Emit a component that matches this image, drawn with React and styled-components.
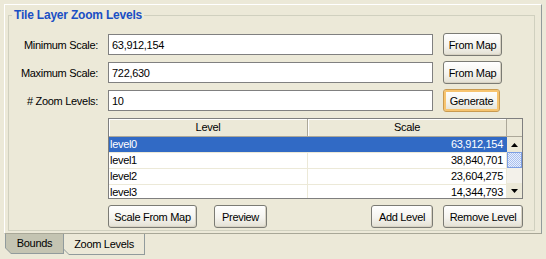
import React from 'react'
import styled, { createGlobalStyle } from 'styled-components'

const GlobalStyle = createGlobalStyle`
  html, body {
    margin: 0;
    padding: 0;
    background: #ece9d8;
  }
  body {
    font-family: "Liberation Sans", Arial, sans-serif;
    font-size: 11px;
    letter-spacing: -0.3px;
    color: #000;
  }
`

const Window = styled.div`
  width: 546px;
  height: 259px;
  box-sizing: border-box;
  padding: 4px 4px 0 4px;
  display: flex;
  flex-direction: column;
`

const TabPane = styled.div`
  height: 230px;
  box-sizing: border-box;
  border-left: 1px solid #fff;
  border-top: 1px solid #fff;
  border-right: 1px solid #919b9c;
  border-bottom: 1px solid #a8a797;
  padding: 3px 6px 0 3px;
`

const Group = styled.fieldset`
  box-sizing: border-box;
  height: 223px;
  margin: 0;
  padding: 0;
  border: 1px solid #d0d0bf;
  min-width: 0;
`

const Title = styled.legend`
  margin-left: 3px;
  padding: 0 2px;
  font-weight: bold;
  font-size: 12px;
  line-height: 14px;
  letter-spacing: -0.2px;
  color: #1a4fc4;
`

const Body = styled.div`
  padding-top: 11px;
`

const Form = styled.div`
  display: grid;
  grid-template-columns: 89px 325px auto;
  grid-auto-rows: 23px;
  column-gap: 10px;
  row-gap: 5px;
  align-items: center;
`

const Label = styled.label`
  text-align: right;
`

const Field = styled.input`
  box-sizing: border-box;
  height: 21px;
  width: 100%;
  margin: 0;
  padding: 0 3px;
  border: 1px solid #808080;
  background: #fff;
  font: inherit;
  letter-spacing: inherit;
  color: #000;
  outline: none;
`

const Btn = styled.button`
  box-sizing: border-box;
  height: 23px;
  width: ${p => p.$w}px;
  margin: 0;
  padding: 0;
  font: inherit;
  letter-spacing: inherit;
  color: #000;
  justify-self: start;
  border: 1px solid ${p => (p.$focus ? '#c99a50' : '#7b7b74')};
  border-radius: 3px;
  background: linear-gradient(#ffffff, #f5f4ef 55%, #e3e0d3);
  box-shadow: ${p => (p.$focus ? 'inset 0 0 0 2px #f7c46f' : 'inset -1px -1px 0 #d8d3c4')};
`

const Lower = styled.div`
  margin: 6px 0 0 99px;
  width: 415px;
`

const Table = styled.div`
  box-sizing: border-box;
  height: 81px;
  border: 1px solid #7f7f7f;
  background: #fff;
  display: grid;
  grid-template-columns: 398px 15px;
  grid-template-rows: 18px 61px;
`

const Header = styled.div`
  display: grid;
  grid-template-columns: 199px 199px;
  background: #ece9d8;
`

const HeadCell = styled.div`
  box-sizing: border-box;
  border-right: 1px solid #aca899;
  border-bottom: 1px solid #aca899;
  box-shadow: inset 1px 1px 0 #fff;
  text-align: center;
  line-height: 17px;
`

const Corner = styled.div`
  background: #ece9d8;
  border-bottom: 1px solid #aca899;
  box-sizing: border-box;
`

const Rows = styled.div`
  overflow: hidden;
`

const Row = styled.div`
  display: grid;
  grid-template-columns: 199px 199px;
  height: 16px;
  box-sizing: border-box;
  border-bottom: 1px solid #ece9d8;
  background: ${p => (p.$selected ? '#316ac5' : '#fff')};
  color: ${p => (p.$selected ? '#fff' : '#000')};
  line-height: 15px;
`

const Cell = styled.div`
  box-sizing: border-box;
  padding: ${p => (p.$right ? '0 3px 0 0' : '0 0 0 1px')};
  text-align: ${p => (p.$right ? 'right' : 'left')};
  border-right: 1px solid ${p => (p.$selected ? '#316ac5' : '#ece9d8')};
`

const Scroll = styled.div`
  display: flex;
  flex-direction: column;
  background: #f3f1ea;
`

const Arrow = styled.div`
  height: 15px;
  flex: none;
  background: #ece9d8;
  display: flex;
  align-items: center;
  justify-content: center;
`

const Thumb = styled.div`
  height: 16px;
  flex: none;
  box-sizing: border-box;
  border: 1px solid #7d9fe3;
  background: repeating-conic-gradient(#a9c0ef 0 25%, #e8effc 0 50%) 0 0 / 2px 2px;
`

const Track = styled.div`
  flex: 1;
`

const Actions = styled.div`
  margin-top: 6px;
  display: flex;
  justify-content: space-between;
`

const ActionGroup = styled.div`
  display: flex;
  gap: ${p => p.$gap}px;
`

const Tabs = styled.div`
  display: flex;
  padding-left: 1px;
`

const Tab = styled.div`
  width: ${p => p.$w}px;
  height: ${p => p.$h}px;
  padding: 0 1px 1px 1px;
  box-sizing: border-box;
  margin-left: ${p => p.$ml || 0}px;
  background: #919b9c;
  clip-path: polygon(0 0, 100% 0, 100% 100%, 6px 100%, 0 calc(100% - 6px));
`

const TabFace = styled.div`
  height: 100%;
  background: ${p => (p.$active ? '#ece9d8' : '#c4c4b2')};
  clip-path: polygon(0 0, 100% 0, 100% 100%, 5px 100%, 0 calc(100% - 5px));
  display: flex;
  align-items: center;
  justify-content: center;
  padding-bottom: 1px;
  box-sizing: border-box;
`

const TriUp = () => (
  <svg width="7" height="4" viewBox="0 0 7 4"><polygon points="3.5,0 7,4 0,4" fill="#000" /></svg>
)
const TriDown = () => (
  <svg width="7" height="4" viewBox="0 0 7 4"><polygon points="0,0 7,0 3.5,4" fill="#000" /></svg>
)

const levels = [
  { name: 'level0', scale: '63,912,154' },
  { name: 'level1', scale: '38,840,701' },
  { name: 'level2', scale: '23,604,275' },
  { name: 'level3', scale: '14,344,793' },
]

export default function App() {
  return (
    <>
      <GlobalStyle />
      <Window>
        <TabPane>
          <Group>
            <Title>Tile Layer Zoom Levels</Title>
            <Body>
              <Form>
                <Label>Minimum Scale:</Label>
                <Field defaultValue="63,912,154" />
                <Btn $w={59}>From Map</Btn>
                <Label>Maximum Scale:</Label>
                <Field defaultValue="722,630" />
                <Btn $w={59}>From Map</Btn>
                <Label># Zoom Levels:</Label>
                <Field defaultValue="10" />
                <Btn $w={57} $focus>Generate</Btn>
              </Form>
              <Lower>
                <Table>
                  <Header>
                    <HeadCell>Level</HeadCell>
                    <HeadCell>Scale</HeadCell>
                  </Header>
                  <Corner />
                  <Rows>
                    {levels.map((l, i) => (
                      <Row key={l.name} $selected={i === 0}>
                        <Cell $selected={i === 0}>{l.name}</Cell>
                        <Cell $right $selected={i === 0}>{l.scale}</Cell>
                      </Row>
                    ))}
                  </Rows>
                  <Scroll>
                    <Arrow><TriUp /></Arrow>
                    <Thumb />
                    <Track />
                    <Arrow><TriDown /></Arrow>
                  </Scroll>
                </Table>
                <Actions>
                  <ActionGroup $gap={17}>
                    <Btn $w={89}>Scale From Map</Btn>
                    <Btn $w={53}>Preview</Btn>
                  </ActionGroup>
                  <ActionGroup $gap={10}>
                    <Btn $w={62}>Add Level</Btn>
                    <Btn $w={80}>Remove Level</Btn>
                  </ActionGroup>
                </Actions>
              </Lower>
            </Body>
          </Group>
        </TabPane>
        <Tabs>
          <Tab $w={59} $h={20}>
            <TabFace>Bounds</TabFace>
          </Tab>
          <Tab $w={82} $h={21} $ml={-1}>
            <TabFace $active>Zoom Levels</TabFace>
          </Tab>
        </Tabs>
      </Window>
    </>
  )
}
